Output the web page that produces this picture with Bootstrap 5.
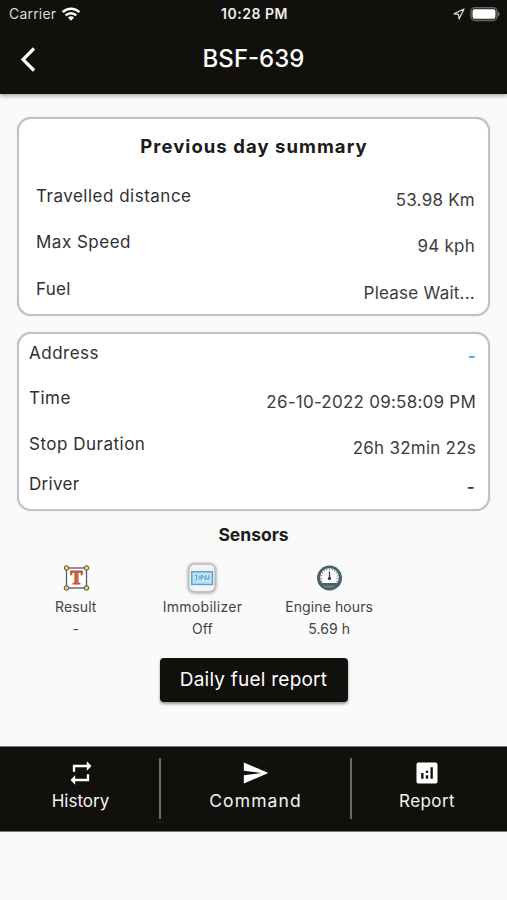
<!DOCTYPE html>
<html lang="en">
<head>
<meta charset="utf-8">
<meta name="viewport" content="width=device-width, initial-scale=1">
<title>BSF-639</title>
<link href="https://cdn.jsdelivr.net/npm/bootstrap@5.3.0/dist/css/bootstrap.min.css" rel="stylesheet">
<style>
  body { font-family: Inter, "Liberation Sans", sans-serif; background: #fafafa; color: #303030; height: 900px; overflow: hidden; }
  svg { display: block; flex: none; }
  .ink { background: #11100c; color: #fff; }
  .app-head { height: 94px; box-shadow: 0 2px 4px rgba(60,40,40,.4); }
  .status-bar { height: 28px; padding: 0 7px 0 9px; font-size: 14px; line-height: 28px; }
  .status-bar > * { flex: 1 1 0; }
  .status-left { gap: 5px; } .status-right { gap: 5px; }
  .carrier { color: #d8d8d6; letter-spacing: .2px; }
  .clock { font-weight: 600; font-size: 14px; color: #eee; letter-spacing: .5px; }
  .title-bar { height: 62px; padding: 0 20px; }
  .title-bar > div { flex: 1 1 0; }
  .title-bar h1 { font-size: 24px; font-weight: 500; line-height: 61px; height: 62px; }
  .panel { border: 2px solid #c2c2c2; border-radius: 14px; background: #fff; margin: 0 17px; box-shadow: 0 0 1px #bbb; }
  .panel-a { margin-top: 23px; height: 199px; padding: 15px 13px 0 17px; }
  .panel-b { margin-top: 16px; height: 179px; padding: 7px 12px 0 10px; }
  .head-text { font-size: 17.5px; font-weight: 700; line-height: 24px; color: #1b1b1b; }
  .head-wide { font-size: 18.5px; letter-spacing: 1.050px; margin: 0 3px 26px 0; }
  .line { font-size: 17px; line-height: 24px; height: 46.300px; font-weight: 400; letter-spacing: .5px; }
  .tight { letter-spacing: .3px; }
  .line .val { padding-top: 4px; color: #3c3c3c; letter-spacing: .24px; }
  .line .dash { padding-top: 3px; font-weight: 600; }
  .line .sky { color: #4ba3da; }
  .line-45 { height: 45px; } .line-40 { height: 40.200px; }
  .inset-r { margin-right: 1px; }
  .sensors { margin: 16px 0 0 12.500px; width: 380px; }
  .sensor { font-size: 14px; line-height: 22px; color: #444; letter-spacing: .1px; }
  .sensor svg { margin: 0 auto 3px; }
  .sensor-wide { letter-spacing: .3px; }
  .fuel-btn { width: 188px; height: 44px; border-radius: 4px; font-size: 19px; letter-spacing: .23px; padding: 1px 0 0; margin-top: 18px; box-shadow: 0 2px 3px rgba(0,0,0,.4); }
  .bottom-bar { height: 86px; margin-top: 44px; border-top: 1px solid #777; border-bottom: 1px solid #777; padding: 11px 0 12px; font-size: 17px; }
  .bottom-bar a { color: #f4f4f2; line-height: 24px; text-decoration: none; }
  .bottom-bar svg { margin: 1px auto 2px; }
  .bottom-bar a + a { border-left: 2px solid #6a6965; }
  .bottom-bar a:last-child { padding-right: 5px; }
  .w-a { width: 159px; padding-left: 2px; } .w-b { width: 191px; }
  .spread { font-size: 17.500px; letter-spacing: 1.100px; } .spread-s { letter-spacing: .4px; }
</style>
</head>
<body>
<header class="app-head ink">
  <div class="status-bar d-flex align-items-center">
    <div class="status-left d-flex align-items-center"><span class="carrier">Carrier</span>
      <svg width="20" height="15" viewBox="0 0 20 15" fill="none" stroke="#fff" stroke-width="2.5"><path d="M1.600 5.100a12 12 0 0 1 16.800 0M4.700 8.300a7.600 7.600 0 0 1 10.600 0"/><path d="M10 13.700 6.900 10.600a4.500 4.500 0 0 1 6.200 0Z" fill="#fff" stroke="none"/></svg>
    </div>
    <div class="clock text-center">10:28 PM</div>
    <div class="status-right d-flex align-items-center justify-content-end">
      <svg width="12" height="12" viewBox="0 0 12 12" fill="none" stroke="#ddd" stroke-width="1.2" stroke-linejoin="round"><path d="M11 1 1 5.800l4.600.5L6 11Z"/></svg>
      <svg width="30" height="15" viewBox="0 0 30 15"><rect x="1" y=".5" width="26" height="13" rx="4" fill="#2a2926" stroke="#666" stroke-width="1.400"/><rect x="2.600" y="2.200" width="22.800" height="9.600" rx="2" fill="#fff"/><path d="M28 4.800c2 .6 2 4 0 4.600Z" fill="#777"/></svg>
    </div>
  </div>
  <div class="title-bar d-flex align-items-center">
    <div><svg width="17" height="26" viewBox="0 0 17 26" fill="none" stroke="#fff" stroke-width="3.200"><path d="M14 2.500 3 13.500l11 11"/></svg></div>
    <h1 class="m-0">BSF-639</h1>
    <div></div>
  </div>
</header>

<main>
  <section class="panel panel-a">
    <h2 class="head-text head-wide text-center">Previous day summary</h2>
    <div class="line d-flex justify-content-between"><span>Travelled distance</span><span class="val">53.98 Km</span></div>
    <div class="line d-flex justify-content-between"><span>Max Speed</span><span class="val">94 kph</span></div>
    <div class="line d-flex justify-content-between"><span class="tight">Fuel</span><span class="val">Please Wait...</span></div>
  </section>
  <section class="panel panel-b">
    <div class="line line-45 d-flex justify-content-between"><span>Address</span><span class="val dash sky">-</span></div>
    <div class="line d-flex justify-content-between"><span>Time</span><span class="val">26-10-2022 09:58:09 PM</span></div>
    <div class="line line-40 d-flex justify-content-between"><span>Stop Duration</span><span class="val">26h 32min 22s</span></div>
    <div class="line line-40 d-flex justify-content-between"><span class="tight">Driver</span><span class="val dash inset-r">-</span></div>
  </section>

  <h2 class="head-text text-center mb-0 mt-2 pt-1">Sensors</h2>
  <div class="sensors row g-0 text-center">
    <div class="sensor col-4">
      <svg width="30" height="30" viewBox="0 0 30 30"><rect x="5.500" y="5" width="20" height="20" fill="#fff" stroke="#555a66" stroke-width="1.300"/><g fill="#f0d060" stroke="#55503c" stroke-width="1"><circle cx="5.500" cy="5" r="2.300"/><circle cx="25.500" cy="5" r="2.300"/><circle cx="5.500" cy="25" r="2.300"/><circle cx="25.500" cy="25" r="2.300"/></g><text x="15.500" y="20.800" text-anchor="middle" font-family="Liberation Serif, serif" font-weight="700" font-size="18" letter-spacing="0" fill="#d8683c" stroke="#b85a38" stroke-width="1.200">T</text></svg>
      Result<br>-</div>
    <div class="sensor col-4">
      <svg width="34" height="30" viewBox="0 0 34 30" overflow="visible"><defs><filter id="glow" x="-30%" y="-30%" width="160%" height="160%"><feGaussianBlur stdDeviation="1.500"/></filter></defs><rect x="2.500" y="0" width="29" height="30.500" rx="7" fill="#aaa" filter="url(#glow)"/><rect x="4.500" y="1.800" width="25" height="26.500" rx="5" fill="#f3f3f2"/><rect x="6.800" y="8.800" width="20.600" height="12.600" fill="#d9eef8" stroke="#4aa5d4" stroke-width="1.500"/><rect x="9" y="11" width="16.200" height="8.200" fill="none" stroke="#9ccfe8" stroke-width=".8"/><path d="M10 12.300h1.600v4q0 1.500-1.500 1.500M14 12.500v4.800M16 17.500v-4.800h2v2.300h-2M20 17.500v-4.500h2M23.800 12.300v4h-2v-2" fill="none" stroke="#3f97c8" stroke-width="1"/></svg>
      <span class="sensor-wide">Immobilizer</span><br>Off</div>
    <div class="sensor col-4">
      <svg width="30" height="30" viewBox="0 0 30 30"><circle cx="15.500" cy="15" r="12.500" fill="#47626a"/><path d="M8 20a9.300 9.300 0 1 1 15 0Z" fill="#fff"/><path d="M8.700 18.500a8 8 0 1 1 13.600 0" fill="none" stroke="#637980" stroke-width="1.200" stroke-dasharray="1 1.700"/><path d="M15.500 8.500v7" stroke="#30454e" stroke-width="1.300"/><circle cx="15.500" cy="15.500" r="1.700" fill="#30454e"/><path d="M10.500 23.500h10" stroke="#b5a747" stroke-width="1.600" stroke-dasharray="1.500 1"/></svg>
      Engine hours<br>5.69 h</div>
  </div>
  <button class="btn ink fuel-btn d-block mx-auto">Daily fuel report</button>
</main>

<nav class="bottom-bar ink d-flex">
  <a class="w-a text-center"><svg width="28" height="28" viewBox="0 0 24 24" fill="#fff"><path d="M7 7h10v3l4-4-4-4v3H5v6h2V7zm10 10H7v-3l-4 4 4 4v-3h12v-6h-2v4z"/></svg>History</a>
  <a class="w-b text-center"><svg width="29" height="28" viewBox="0 0 24 24" fill="#fff"><path d="M2.010 21 23 12 2.010 3 2 10l15 2-15 2z"/></svg><span class="spread">Command</span></a>
  <a class="flex-fill text-center"><svg width="30" height="28" viewBox="0 0 24 24" fill="#fff"><path fill-rule="evenodd" d="M4.500 3h15A1.500 1.500 0 0 1 21 4.500v15a1.500 1.500 0 0 1-1.500 1.500h-15A1.500 1.500 0 0 1 3 19.500v-15A1.500 1.500 0 0 1 4.500 3zM7 12v5h2v-5zM15 7v10h2V7zM11 14v3h2v-3zM11 10v2h2v-2z"/></svg><span class="spread-s">Report</span></a>
</nav>
<script src="https://cdn.jsdelivr.net/npm/bootstrap@5.3.0/dist/js/bootstrap.bundle.min.js"></script>
</body>
</html>
